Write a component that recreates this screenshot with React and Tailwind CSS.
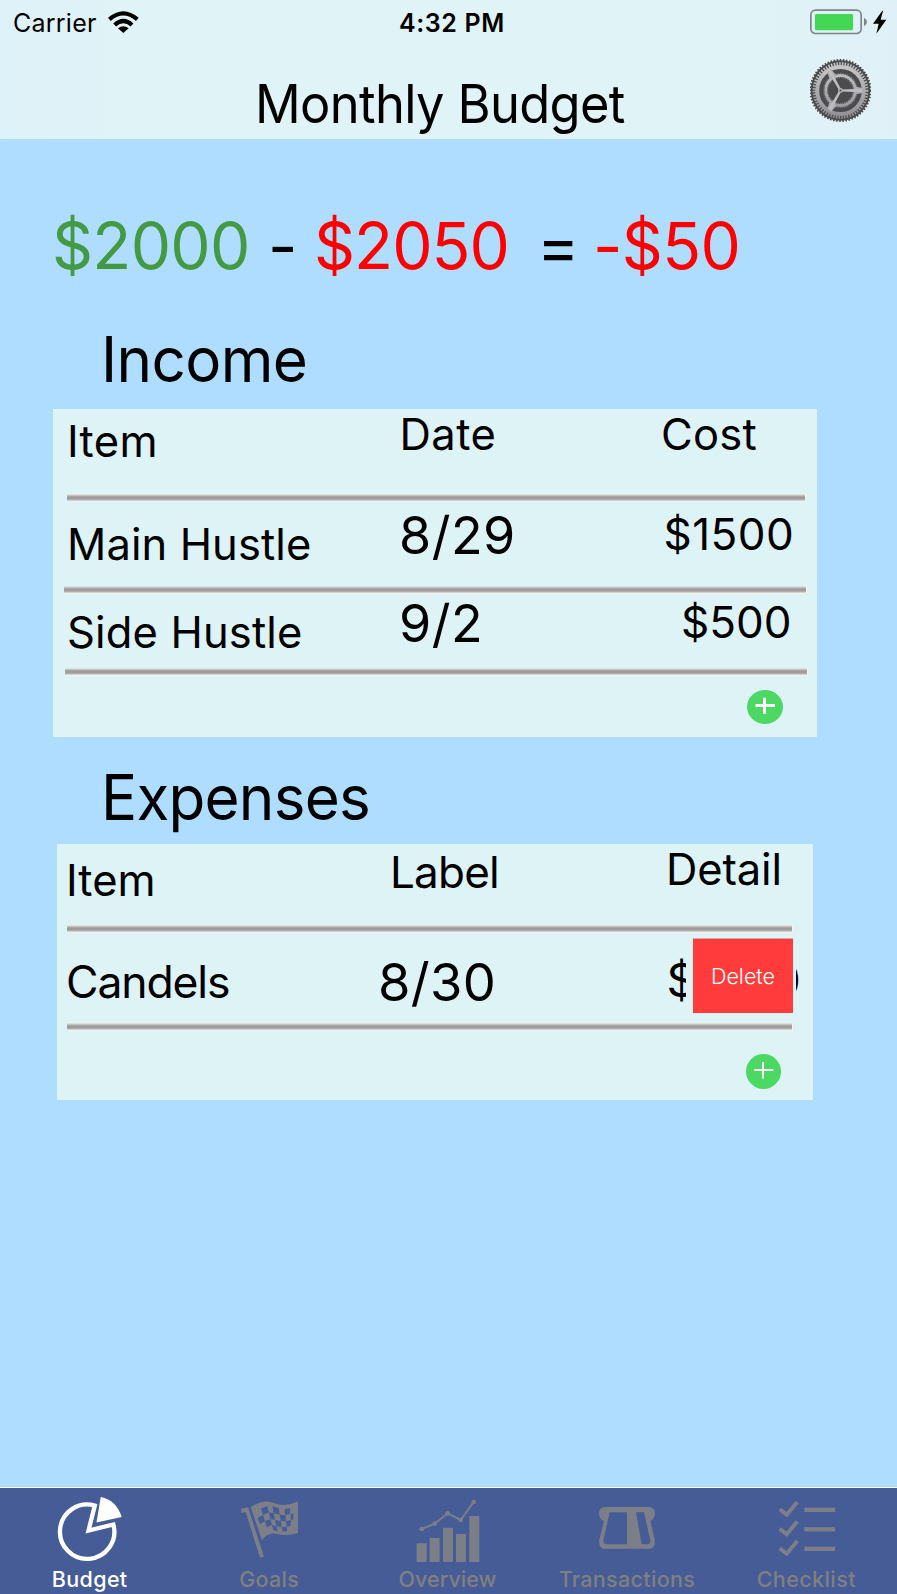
import React from 'react';

function WifiIcon() {
  return (
    <svg className="h-[22px] w-[31px]" viewBox="325 32 93 66" fill="none" stroke="#000" strokeWidth="12.5">
      <path d="M329 57Q371 21 413 57" />
      <path d="M345 74Q371 50 397 74" />
      <path d="M371 98L355 84Q371 71 387 84Z" fill="#000" stroke="none" />
    </svg>
  );
}

function BatteryIcon() {
  return (
    <svg className="h-[26px] w-[77px]" viewBox="1089 26 231 78">
      <rect x="1091.5" y="29.5" width="151" height="70" rx="14" fill="none" stroke="#7c8588" strokeWidth="5" />
      <rect x="1104" y="41" width="114" height="49" rx="4" fill="#44d755" />
      <path d="M1251 52Q1260 57 1260 65T1251 78Z" fill="#7c8588" />
      <path d="M1306 31L1278 70H1295L1288 100L1318 58H1301L1308 32Z" />
    </svg>
  );
}

function GearIcon() {
  const spokes = [0, 120, 240];
  return (
    <svg className="h-[63px] w-[61px]" viewBox="-31 -31.5 62 63" preserveAspectRatio="none">
      <defs>
        <linearGradient id="steel" gradientUnits="userSpaceOnUse" x1="0" y1="-28" x2="0" y2="28">
          <stop offset="0" stopColor="#c9c9cc" />
          <stop offset="1" stopColor="#8e8e94" />
        </linearGradient>
      </defs>
      <circle r="30.3" fill="#4b4b4d" />
      <circle r="30.5" fill="none" stroke="#4b4b4d" strokeWidth="2" strokeDasharray="1.6 1.57" />
      <circle r="26.6" fill="none" stroke="url(#steel)" strokeWidth="3.4" strokeDasharray="1.5 1.3" />
      <circle r="23.6" fill="none" stroke="url(#steel)" strokeWidth="4" />
      <circle r="15" fill="none" stroke="url(#steel)" strokeWidth="3" />
      <circle r="17" fill="none" stroke="#858589" strokeWidth="1.3" strokeDasharray="1.1 1.3" />
      <circle r="13" fill="none" stroke="#858589" strokeWidth="1.3" strokeDasharray="1 1.2" />
      {spokes.map((a) => (
        <g key={a} transform={`rotate(${a})`}>
          <path d="M15 -4L22.5 -2.5V2.5L15 4Z" fill="url(#steel)" />
          <path d="M0 -1.1L22 -1.7V1.7L0 1.1Z" fill="#bdbdc1" />
        </g>
      ))}
      <circle r="2.4" fill="#b4b4b8" />
      <circle r="1" fill="#48484a" />
    </svg>
  );
}

function PieIcon() {
  return (
    <svg className="mt-[9px] h-[65px] w-[65px]" viewBox="171 50 196 196">
      <path d="M285 76L266 151L341 133A82 82 0 1 1 285 76Z" fill="none" stroke="#fff" strokeWidth="13" />
      <path d="M303 50Q350 60 366 110L290 127Z" fill="#fff" />
    </svg>
  );
}

function FlagIcon() {
  return (
    <svg className="mt-[13px] h-[57px] w-[57px]" viewBox="720 61 171 171">
      <path d="M721 84L741 80L789 228L777 231L734 94L721 97Z" fill="#7c7f88" />
      <path d="M749 80Q785 52 821 68Q855 80 891 62V157Q857 168 828 160Q800 154 783 179Z" fill="#7c7f88" />
      <g fill="#455c96">
        <path d="M780 84L798 76L804 95L786 103Z" />
        <path d="M814 77L833 82L836 102L818 98Z" />
        <path d="M770 112L786 103L792 121L777 130Z" />
        <path d="M804 95L818 98L822 118L808 115Z" />
        <path d="M836 102L853 104L855 122L839 121Z" />
        <path d="M850 86L867 83V100L853 104Z" />
        <path d="M792 121L808 115L813 133L797 140Z" />
        <path d="M822 118L839 121L842 139L826 136Z" />
        <path d="M855 122L869 118V135L857 138Z" />
        <path d="M869 101L877 98V116L869 118Z" />
        <path d="M813 133L826 136L830 152L817 148Z" />
        <path d="M842 139L857 138L859 151L845 153Z" />
      </g>
    </svg>
  );
}

function ChartIcon() {
  const points = [[365, 147], [404, 131], [443, 100], [482, 120], [521, 66]];
  return (
    <svg className="mt-[11px] mr-[2px] h-[63px] w-[65px]" viewBox="345 57 195 189" fill="#7c7f88">
      <path d="M350 190H380V246H350ZM389 174H419V246H389ZM429 143H459V246H429ZM468 162H498V246H468ZM508 108H538V246H508Z" />
      <path d="M365 147L404 131L443 100L482 120L521 66" fill="none" stroke="#7c7f88" strokeWidth="6" />
      {points.map(([x, y]) => <circle key={x} cx={x} cy={y} r="7" />)}
    </svg>
  );
}

function TransactionsIcon() {
  return (
    <svg className="mt-[19px] mr-[2px] h-[42px] w-[56px]" viewBox="6 82 168 126">
      <path
        fill="#7c7f88"
        fillRule="evenodd"
        d="M22 82H158Q174 84 174 102Q172 118 160 124L173 180Q176 205 158 207H22Q4 205 7 180L21 124Q6 116 6 102Q6 84 22 82ZM38 98L19 182Q19 193 28 194H90V98ZM117 98L134 194H152Q161 192 160 182L141 98Z"
      />
    </svg>
  );
}

function ChecklistIcon() {
  return (
    <svg className="mt-[13px] h-[55px] w-[56px]" viewBox="546 62 168 165" fill="none" stroke="#7c7f88">
      {[0, 58.5, 117].map((y) => (
        <g key={y} transform={`translate(0 ${y})`}>
          <path d="M548 87L569 103L601 65" strokeWidth="12" />
          <path d="M622 88.5H714" strokeWidth="13" />
        </g>
      ))}
    </svg>
  );
}

const tabs = [
  { label: 'Budget', Icon: PieIcon, text: 'text-white tracking-[0.34px]' },
  { label: 'Goals', Icon: FlagIcon, text: 'text-[#808080] tracking-[0.28px]' },
  { label: 'Overview', Icon: ChartIcon, text: 'pr-[2px] text-[#808080] tracking-[0.04px]' },
  { label: 'Transactions', Icon: TransactionsIcon, text: 'pr-[2px] text-[#808080] tracking-[0.32px]' },
  { label: 'Checklist', Icon: ChecklistIcon, text: 'pr-[2px] text-[#808080] tracking-[0.42px]' },
];

function Divider({ className }) {
  return (
    <div className={`h-[8px] shrink-0 border-r border-r-[#f7f3f3] bg-[linear-gradient(#e3dfde_0_1px,#c3c1c1_1px_2px,#a8a7a7_2px_3px,#9c9c9c_3px_5px,#b0aeae_5px_6px,#d3cfce_6px_7px,#f4f1f1_7px_8px)] ${className}`} />
  );
}

function AddButton({ className, stroke }) {
  return (
    <button className={`block ${className}`} aria-label="Add">
      <svg className="size-full" viewBox="0 0 36 35" preserveAspectRatio="none">
        <ellipse cx="18" cy="17.5" rx="18" ry="17.5" fill="#4bd964" />
        <path d="M8.5 16H28M17.5 8V24.5" stroke="#fff" strokeWidth={stroke} />
      </svg>
    </button>
  );
}

export default function App() {
  return (
    <div className="flex h-[1594px] w-[897px] flex-col overflow-hidden bg-[#afddff] font-['Inter',sans-serif] leading-none whitespace-nowrap text-black">
      <header className="h-[139px] shrink-0 bg-[linear-gradient(90deg,#ddf1f8,#e0f3f7_12%,#e0f3f7_85%,#dff1f7)]">
        <div className="flex h-[50px] items-start">
          <div className="flex w-[399px] gap-[11px] pl-[13px]">
            <span className="pt-[11px] text-[25px] tracking-[0.24px]">Carrier</span>
            <span className="pt-[11px]"><WifiIcon /></span>
          </div>
          <span className="w-[411px] pt-[11px] text-[25px] font-semibold tracking-[0.6px]">4:32 PM</span>
          <span className="pt-[9px]"><BatteryIcon /></span>
        </div>
        <div className="flex items-start">
          <h1 className="w-[555px] pt-[28px] pl-[255px] text-[53px]">
            <span className="inline-block origin-left scale-x-[0.955] tracking-[-0.68px]">Monthly Budget</span>
          </h1>
          <span className="ml-[255px] pt-[9px]"><GearIcon /></span>
        </div>
      </header>

      <main className="flex h-[1348px] shrink-0 flex-col items-start">
        <div className="flex h-[189px] pt-[75px] pl-[52px] text-[64px]">
          <span className="w-[216px] tracking-[-0.71px] text-[#439a43]">$2000</span>
          <span className="w-[46px]">-</span>
          <span className="w-[223px] tracking-[-0.97px] text-[#f00]">$2050</span>
          <span className="w-[56px]">=</span>
          <span className="tracking-[-0.6px] text-[#f00]">-$50</span>
        </div>

        <h2 className="h-[81px] pl-[101px] text-[63px]">
          <span className="inline-block origin-left scale-x-[0.955] tracking-[-0.64px]">Income</span>
        </h2>
        <section className="ml-[53px] flex h-[328px] w-[764px] flex-col bg-[#def3f6]">
          <div className="grid h-[85px] grid-cols-[345px_262px_1fr] text-[43.5px]">
            <span className="pt-[11px] pl-[14px] tracking-[0.3px]">Item</span>
            <span className="pt-[4px] pl-[1.5px] tracking-[0.46px]">Date</span>
            <span className="pt-[4px] pl-[1px] tracking-[0.23px]">Cost</span>
          </div>
          <Divider className="ml-[14px] w-[739px]" />
          <div className="grid h-[84px] grid-cols-[345px_262px_1fr]">
            <span className="pt-[21px] pl-[14px] text-[43.5px] tracking-[0.1px]">Main Hustle</span>
            <span className="pt-[8px] pl-[1px] text-[52px] tracking-[0.5px]">8/29</span>
            <span className="pt-[10px] pl-[3.5px] text-[44px] tracking-[0.47px]">$1500</span>
          </div>
          <Divider className="ml-[11px] w-[743px]" />
          <div className="grid h-[74px] grid-cols-[345px_262px_1fr]">
            <span className="pt-[17px] pl-[14px] text-[43.5px] tracking-[0.15px]">Side Hustle</span>
            <span className="pt-[4px] pl-[1px] text-[52px] tracking-[0.5px]">9/2</span>
            <span className="pt-[6px] pl-[21px] text-[44px]">$500</span>
          </div>
          <Divider className="ml-[12px] w-[743px]" />
          <AddButton className="mt-[14px] ml-[694px] h-[34px] w-[36px]" stroke={3} />
        </section>

        <h2 className="h-[107px] pt-[29px] pl-[101px] text-[63px]">
          <span className="inline-block origin-left scale-x-[0.955] tracking-[-0.8px]">Expenses</span>
        </h2>
        <section className="ml-[57px] flex h-[256px] w-[756px] flex-col bg-[#def3f6]">
          <div className="grid h-[81px] grid-cols-[333px_276px_1fr]">
            <span className="pt-[15px] pl-[9px] text-[43.5px]">Item</span>
            <span className="pt-[6px] text-[44px] tracking-[-0.79px]">Label</span>
            <span className="pt-[4px] text-[43.5px] tracking-[-0.13px]">Detail</span>
          </div>
          <Divider className="ml-[10px] w-[726px]" />
          <div className="relative grid h-[90px] grid-cols-[321px_288.5px_1fr]">
            <span className="pt-[27px] pl-[9px] text-[44.5px] tracking-[-1.13px]">Candels</span>
            <span className="pt-[23px] text-[52.5px] tracking-[0.3px]">8/30</span>
            <span className="pt-[23px] text-[47px] tracking-[-0.7px]">$1500</span>
            <div className="absolute top-[3px] left-[629px] h-[79px] w-[110px] bg-[#def3f6] pt-[2px] pl-[7px]">
              <button className="flex h-[75px] w-[100px] items-center justify-center border-t border-[#d9a9a8] bg-[#ff3b3b] pt-[2px] text-[21.5px] font-light text-white">
                Delete
              </button>
            </div>
          </div>
          <Divider className="ml-[10px] w-[726px]" />
          <AddButton className="mt-[23px] ml-[689px] h-[35px] w-[35px]" stroke={2} />
        </section>
      </main>

      <nav className="grid h-[107px] shrink-0 grid-cols-5 border-t border-white bg-[#455c96]">
        {tabs.map(({ label, Icon, text }) => (
          <a key={label} className="flex flex-col items-center">
            <span className="h-[81px]"><Icon /></span>
            <span className={`text-[21.5px] font-medium ${text}`}>{label}</span>
          </a>
        ))}
      </nav>
    </div>
  );
}
